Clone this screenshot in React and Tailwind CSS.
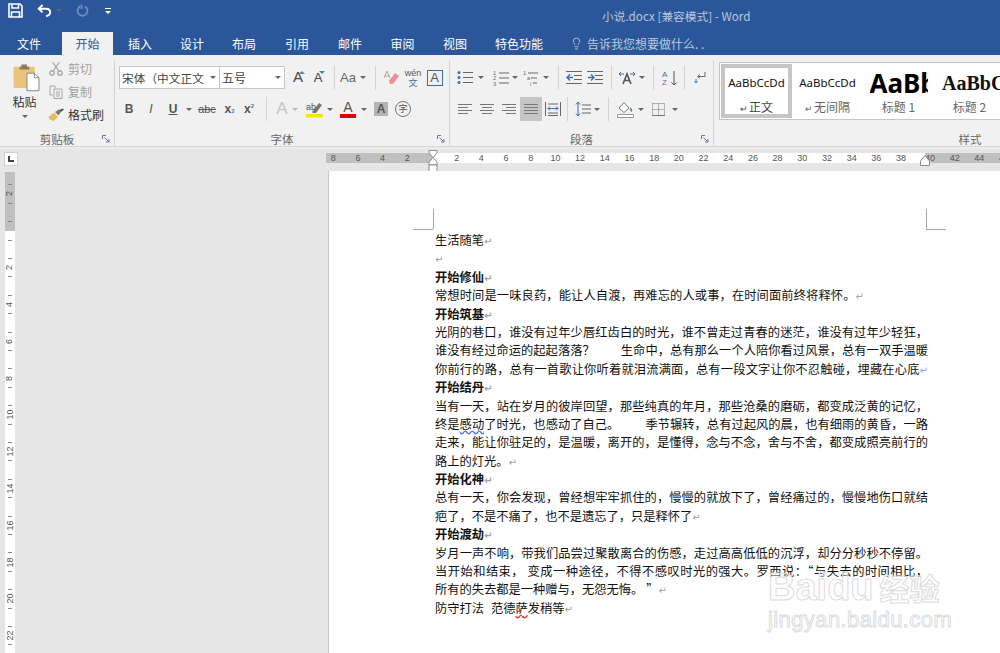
import React from "react";
import { Lightbulb } from "lucide-react";

const CJK = "font-['Noto_Sans_CJK_SC','Liberation_Sans',sans-serif]";

// tiny dropdown triangle
function Caret({ className = "", dim = false }) {
  return (
    <span className={`flex justify-center items-center ${className}`}>
      <span
        className={`w-0 h-0 border-x-[3px] border-t-[3px] border-x-transparent ${
          dim ? "border-t-[#b5b5b5]" : "border-t-[#666666]"
        }`}
      />
    </span>
  );
}

function Sep({ className = "" }) {
  return <span className={`w-px h-[24px] bg-[#d4d4d4] shrink-0 ${className}`} />;
}

function Cell({ className = "", children }) {
  return (
    <span className={`flex items-center justify-center shrink-0 h-full ${className}`}>
      {children}
    </span>
  );
}

function Launcher() {
  return (
    <svg className="absolute right-[4px] top-[3px]" width="8" height="8" viewBox="0 0 8 8" fill="none" stroke="#777">
      <path d="M0.5 4V0.5H4" />
      <path d="M2.5 2.5L7 7M7 4V7H4" stroke="#5a7fb0" />
    </svg>
  );
}

function GroupLabel({ text, launcher = true }) {
  return (
    <div className="relative mt-auto h-[14px] leading-[14px] text-center text-[11.5px] text-[#666666]">
      {text}
      {launcher && <Launcher />}
    </div>
  );
}

function Lines({ ys, x1 = 2, x2 = 16, stroke = "#666" }) {
  return ys.map((y) => <path key={y} d={`M${x1} ${y}H${x2}`} stroke={stroke} />);
}

function Align({ rows }) {
  return (
    <svg width="16" height="14" viewBox="0 0 16 14" fill="none" stroke="#777">
      {rows.map(([a, b], i) => (
        <path key={i} d={`M${a} ${2.5 + i * 3}H${b}`} />
      ))}
    </svg>
  );
}

function TitleBar() {
  return (
    <div className="h-[30px] flex items-start pt-[3px]">
      <svg className="ml-[8px]" width="15" height="15" viewBox="0 0 15 15" fill="none" stroke="#fff" strokeWidth="1.6">
        <path d="M1 1H12L14 3V14H1Z" />
        <path d="M4 1.5V5H10.5V1.5M3.5 14V9H11.5V14" />
      </svg>
      <svg className="ml-[14px] mt-[1px]" width="15" height="14" viewBox="0 0 15 14" fill="none" stroke="#fff" strokeWidth="2">
        <path d="M5.5 1L1.8 4.7L5.5 8.4" />
        <path d="M2 4.7H9C14.5 4.7 14.5 12 9 12" />
      </svg>
      <Caret className="ml-[4px] w-[6px] h-[15px]" />
      <svg className="ml-[13px] mt-[1px]" width="14" height="14" viewBox="0 0 14 14" fill="none" stroke="#6f8fbf" strokeWidth="1.8">
        <path d="M5 2.5A5 5 0 1 0 10 2.5" />
        <path d="M6.5 0.5V5" />
      </svg>
      <span className="ml-[16px] mt-[5px] flex flex-col items-center gap-[2px]">
        <span className="w-[6px] h-px bg-white" />
        <span className="w-0 h-0 border-x-[3px] border-t-[3px] border-x-transparent border-t-white" />
      </span>
      <span className="ml-[491px] mt-[4px] text-[11.7px] text-[#b6c6de] whitespace-nowrap">小说.docx [兼容模式] - Word</span>
    </div>
  );
}

const tabs = [
  ["文件", "w-[62px] pr-[4px]"],
  ["开始", "w-[51px]"],
  ["插入", "w-[54px]"],
  ["设计", "w-[50px]"],
  ["布局", "w-[54px]"],
  ["引用", "w-[52px]"],
  ["邮件", "w-[54px]"],
  ["审阅", "w-[51px]"],
  ["视图", "w-[54px]"],
  ["特色功能", "w-[74px]"],
];

function TabBar() {
  return (
    <div className="h-[25px] flex items-end text-[12px]">
      {tabs.map(([name, w]) => (
        <div
          key={name}
          className={`${w} shrink-0 h-[23px] flex items-center justify-center ${
            name === "开始" ? "bg-[#f1f1f1] text-[#2b579a]" : "text-white"
          }`}
        >
          {name}
        </div>
      ))}
      <div className="ml-[14px] h-[23px] flex items-center gap-[4px] text-[#bac8df] whitespace-nowrap">
        <Lightbulb size={13} strokeWidth={1.6} />
        告诉我您想要做什么. .
      </div>
    </div>
  );
}

function ClipboardGroup() {
  return (
    <div className="w-[115px] shrink-0 flex flex-col border-r border-[#d4d4d4]">
      <div className="flex pt-[3px] h-[60px]">
        <div className="w-[49px] shrink-0 flex flex-col items-center">
          <svg className="ml-[4px]" width="29" height="31" viewBox="0 0 29 31">
            <rect x="0.5" y="4" width="23" height="23" rx="1.5" fill="#eac47a" />
            <path d="M7 4H9V1.5H15V4H17.5V7H7Z" fill="#8a7a62" />
            <path d="M15 11H23L28 16V30H15Z" fill="#fff" stroke="#7f7f7f" />
            <path d="M23 11V16H28" fill="none" stroke="#7f7f7f" />
          </svg>
          <span className="mt-[1px] text-[12px] leading-[18px] text-[#333333]">粘贴</span>
          <Caret className="mt-[2px] h-[8px]" />
        </div>
        <div className="flex flex-col text-[12px] -mt-[6px]">
          <div className="h-[23px] shrink-0 flex items-center text-[#a0a0a0]">
            <svg className="mr-[5px]" width="14" height="15" viewBox="0 0 14 15" fill="none" stroke="#a6a6a6" strokeWidth="1.3">
              <circle cx="3" cy="12" r="2.2" />
              <circle cx="11" cy="12" r="2.2" />
              <path d="M4.2 10L10.5 1M9.8 10L3.5 1" />
            </svg>
            剪切
          </div>
          <div className="h-[23px] shrink-0 flex items-center text-[#a0a0a0]">
            <svg className="mr-[5px]" width="14" height="14" viewBox="0 0 14 14" fill="none" stroke="#a6a6a6">
              <path d="M6 3.5V1H1V10H4M5 4H13V13.5H5Z" />
              <path d="M7 7H11M7 9H11M7 11H11" />
            </svg>
            复制
          </div>
          <div className="h-[23px] shrink-0 flex items-center -ml-[1px] text-[#333333]">
            <svg className="mr-[3px]" width="17" height="14" viewBox="0 0 17 14">
              <path d="M0.5 9L6 4.5L10 9L5 13.5L3.5 11.5L2.5 12.5Z" fill="#e6b95f" />
              <path d="M7 4L11 1.5L13 3.8L10.5 7.5Z" fill="#777" />
              <path d="M11 2L15 0.5L16 1.5L13 4Z" fill="#555" />
            </svg>
            格式刷
          </div>
        </div>
      </div>
      <GroupLabel text="剪贴板" />
    </div>
  );
}

function FontGroup() {
  return (
    <div className={`w-[335px] shrink-0 flex flex-col border-r border-[#d4d4d4]`}>
      <div className="mt-[6px] h-[23px] flex items-center pl-[4px] text-[#444444]">
        <div className="w-[101px] h-full shrink-0 bg-white border border-[#c6c6c6] flex items-center pl-[2px] text-[11.7px] whitespace-nowrap">
          宋体（中文正文
          <Caret className="ml-auto mr-[3px] w-[6px]" />
        </div>
        <div className="w-[65px] h-full shrink-0 bg-white border border-[#c6c6c6] border-l-0 flex items-center pl-[2px] text-[12px]">
          五号
          <Caret className="ml-auto mr-[3px] w-[6px]" />
        </div>
        <Cell className="ml-[3px] w-[20px] text-[15px] font-['Liberation_Sans',sans-serif] relative">
          A<span className="absolute right-[3px] top-[5px] w-0 h-0 border-x-[3px] border-b-[3px] border-x-transparent border-b-[#5a7fb0]" />
        </Cell>
        <Cell className="w-[20px] text-[13px] font-['Liberation_Sans',sans-serif] relative">
          A<span className="absolute right-[3px] top-[5px] w-0 h-0 border-x-[3px] border-t-[3px] border-x-transparent border-t-[#5a7fb0]" />
        </Cell>
        <Sep className="ml-[6px]" />
        <Cell className="ml-[2px] w-[22px] text-[13px] font-['Liberation_Sans',sans-serif] text-[#666666]">Aa</Cell>
        <Caret className="w-[8px]" />
        <Sep className="ml-[8px]" />
        <Cell className="ml-[6px] w-[18px]">
          <svg width="16" height="16" viewBox="0 0 16 16">
            <path d="M6 11L12 3L16 6L10 14H7Z" fill="#ec8f9a" />
            <path d="M1 8L4 1L7 8M2 6H6" fill="none" stroke="#a8a8a8" />
          </svg>
        </Cell>
        <Cell className="ml-[2px] w-[22px] relative">
          <span className="flex flex-col items-center leading-[9px] text-[#3f6fa8]">
            <span className="text-[9px] font-['Liberation_Sans',sans-serif] text-[#555555]">wén</span>
            <span className="text-[9px]">文</span>
          </span>
        </Cell>
        <Cell className="w-[21px]">
          <span className="w-[16px] h-[16px] border border-[#3f6fa8] flex items-center justify-center text-[13px] leading-none font-['Liberation_Sans',sans-serif] text-[#555555]">A</span>
        </Cell>
      </div>
      <div className="mt-[8px] h-[24px] flex items-center pl-[3px] font-['Liberation_Sans',sans-serif] text-[#555555]">
        <Cell className="w-[22px] text-[12px] font-bold">B</Cell>
        <Cell className="w-[22px] text-[12px] italic">I</Cell>
        <Cell className="w-[22px] text-[12px] font-bold underline">U</Cell>
        <Caret className="w-[10px]" />
        <Cell className="w-[26px] text-[11px] line-through">abc</Cell>
        <Cell className="w-[19px] text-[12px] font-bold">
          x<sub className="text-[6px] text-[#4f7fb5]">2</sub>
        </Cell>
        <Cell className="w-[20px] text-[12px] font-bold">
          x<sup className="text-[6px] text-[#4f7fb5]">2</sup>
        </Cell>
        <Sep className="ml-[7px]" />
        <Cell className="ml-[5px] w-[20px] text-[17px] text-[#c4c4c4]">A</Cell>
        <Caret className="w-[6px]" dim />
        <Cell className="ml-[6px] w-[20px]">
          <svg width="17" height="17" viewBox="0 0 17 17">
            <path d="M6 11L13 2L16 4L10 12H7Z" fill="#777" />
            <rect x="0" y="13" width="17" height="3.5" rx="1" fill="#f5e500" />
            <text x="0" y="9" fontSize="9" fontFamily="Liberation Sans" fill="#555">ab</text>
          </svg>
        </Cell>
        <Caret className="ml-[2px] w-[8px]" />
        <Cell className="ml-[4px] w-[20px] relative">
          <span className="flex flex-col items-center">
            <span className="text-[14px] leading-[13px]">A</span>
            <span className="w-[16px] h-[4px] bg-[#e00000]" />
          </span>
        </Cell>
        <Caret className="ml-[2px] w-[8px]" />
        <Cell className="ml-[3px] w-[20px]">
          <span className="w-[14px] h-[14px] bg-[#b4b4b4] flex items-center justify-center text-[12px] font-bold text-[#555555]">A</span>
        </Cell>
        <Cell className="ml-[2px] w-[20px]">
          <span className={`w-[16px] h-[16px] rounded-full border border-[#777777] flex items-center justify-center text-[9px] ${CJK}`}>字</span>
        </Cell>
      </div>
      <GroupLabel text="字体" />
    </div>
  );
}

function ParagraphGroup() {
  return (
    <div className="w-[264px] shrink-0 flex flex-col border-r border-[#d4d4d4]">
      <div className="mt-[6px] h-[23px] flex items-center pl-[5px]">
        <Cell className="w-[20px]">
          <svg width="16" height="15" viewBox="0 0 16 15" fill="none">
            <Lines ys={[2.5, 7.5, 12.5]} x1={6} x2={16} />
            <circle cx="2" cy="2.5" r="1.5" fill="#3f6fa8" />
            <circle cx="2" cy="7.5" r="1.5" fill="#3f6fa8" />
            <circle cx="2" cy="12.5" r="1.5" fill="#3f6fa8" />
          </svg>
        </Cell>
        <Caret className="ml-[2px] w-[8px]" />
        <Cell className="ml-[6px] w-[20px]">
          <svg width="16" height="16" viewBox="0 0 16 16" fill="none">
            <Lines ys={[3, 8, 13]} x1={6} x2={16} />
            <text x="0" y="5" fontSize="5.5" fill="#3f6fa8" fontFamily="Liberation Sans">1</text>
            <text x="0" y="10" fontSize="5.5" fill="#3f6fa8" fontFamily="Liberation Sans">2</text>
            <text x="0" y="15.5" fontSize="5.5" fill="#3f6fa8" fontFamily="Liberation Sans">3</text>
          </svg>
        </Cell>
        <Caret className="w-[8px]" />
        <Cell className="ml-[2px] w-[20px]">
          <svg width="17" height="16" viewBox="0 0 17 16" fill="none">
            <path d="M5 3H15M8 8H14M10 13H14" stroke="#666" />
            <text x="0" y="5" fontSize="5.5" fill="#3f6fa8" fontFamily="Liberation Sans">1</text>
            <text x="4" y="10" fontSize="5.5" fill="#3f6fa8" fontFamily="Liberation Sans">a</text>
            <text x="7" y="15.5" fontSize="5.5" fill="#3f6fa8" fontFamily="Liberation Sans">i</text>
          </svg>
        </Cell>
        <Caret className="ml-[1px] w-[8px]" />
        <Sep className="ml-[8px]" />
        <Cell className="ml-[5px] w-[20px]">
          <svg width="16" height="13" viewBox="0 0 16 13" fill="none">
            <Lines ys={[0.5, 12.5]} x1={0} x2={16} />
            <Lines ys={[4.5, 8.5]} x1={8} x2={16} />
            <path d="M7 6.5H1M4 3.5L1 6.5L4 9.5" stroke="#3f6fa8" strokeWidth="1.4" />
          </svg>
        </Cell>
        <Cell className="ml-[1px] w-[20px]">
          <svg width="16" height="13" viewBox="0 0 16 13" fill="none">
            <Lines ys={[0.5, 12.5]} x1={0} x2={16} />
            <Lines ys={[4.5, 8.5]} x1={8} x2={16} />
            <path d="M1 6.5H7M4 3.5L7 6.5L4 9.5" stroke="#3f6fa8" strokeWidth="1.4" />
          </svg>
        </Cell>
        <Sep className="ml-[6px]" />
        <Cell className="ml-[5px] w-[20px]">
          <svg width="18" height="14" viewBox="0 0 18 14" fill="none">
            <path d="M5 13L9 3L13 13M6.5 9.5H11.5" stroke="#555" strokeWidth="1.6" />
            <path d="M1 3H6M1 3L3 1M1 3L3 5M17 3H12M17 3L15 1M17 3L15 5" stroke="#3f6fa8" />
          </svg>
        </Cell>
        <Caret className="ml-[1px] w-[8px]" />
        <Sep className="ml-[7px]" />
        <Cell className="ml-[6px] w-[20px]">
          <svg width="16" height="16" viewBox="0 0 16 16" fill="none">
            <text x="0" y="7" fontSize="8" fill="#3f6fa8" fontFamily="Liberation Sans">A</text>
            <text x="0" y="15" fontSize="8" fill="#8e5ea8" fontFamily="Liberation Sans">Z</text>
            <path d="M12 1V15M9.5 12.5L12 15L14.5 12.5" stroke="#555" />
          </svg>
        </Cell>
        <Sep className="ml-[4px]" />
        <Cell className="ml-[5px] w-[20px]">
          <svg width="12" height="13" viewBox="0 0 12 13" fill="none">
            <path d="M11 1V5.5H4M6 3.5L3.5 5.5L6 7.5" stroke="#666" />
            <path d="M2 8V12M0.5 10.5L2 12L3.5 10.5" stroke="#3f6fa8" />
          </svg>
        </Cell>
      </div>
      <div className="mt-[8px] h-[24px] flex items-center pl-[4px]">
        <Cell className="w-[22px]"><Align rows={[[1, 15], [1, 11], [1, 15], [1, 11]]} /></Cell>
        <Cell className="w-[22px]"><Align rows={[[1, 15], [3, 13], [1, 15], [3, 13]]} /></Cell>
        <Cell className="w-[22px]"><Align rows={[[1, 15], [5, 15], [1, 15], [5, 15]]} /></Cell>
        <Cell className="w-[22px] bg-[#c6c6c6]"><Align rows={[[1, 15], [1, 15], [1, 15], [1, 15]]} /></Cell>
        <Cell className="w-[22px]">
          <svg width="16" height="16" viewBox="0 0 16 16" fill="none" stroke="#666">
            <path d="M0.5 1V15M15.5 1V15M3 3H13M3 12H13M3 14.5H13" />
            <path d="M3 7.5H13M5 5.5L3 7.5L5 9.5M11 5.5L13 7.5L11 9.5" stroke="#3f6fa8" />
          </svg>
        </Cell>
        <Sep className="ml-[3px]" />
        <Cell className="ml-[5px] w-[20px]">
          <svg width="16" height="16" viewBox="0 0 16 16" fill="none">
            <Lines ys={[4, 8, 12]} x1={7} x2={16} />
            <path d="M3 1V15M1 3.5L3 1L5 3.5M1 12.5L3 15L5 12.5" stroke="#3f6fa8" />
          </svg>
        </Cell>
        <Caret className="w-[8px]" />
        <Sep className="ml-[7px]" />
        <Cell className="ml-[6px] w-[20px]">
          <svg width="17" height="17" viewBox="0 0 17 17" fill="none">
            <path d="M2 7L7 1.5L12 7L7 11.5Z" fill="#fff" stroke="#777" />
            <path d="M13 6C15 8 16 9.5 14.5 11C13.5 10.5 13 8 13 6Z" fill="#3f6fa8" />
            <path d="M0.5 13.5H16.5V16.5H0.5Z" fill="#fff" stroke="#999" />
          </svg>
        </Cell>
        <Caret className="ml-[2px] w-[8px]" />
        <Cell className="ml-[3px] w-[20px]">
          <svg width="13" height="13" viewBox="0 0 13 13" fill="none" stroke="#777" strokeDasharray="1 1">
            <path d="M0.5 0.5H12.5V12.5M0.5 0.5V12.5M6.5 0.5V12.5M0.5 6.5H12.5" />
            <path d="M0 12.5H13" strokeDasharray="none" />
          </svg>
        </Cell>
        <Caret className="ml-[3px] w-[8px]" />
      </div>
      <GroupLabel text="段落" />
    </div>
  );
}

function StyleItem({ selected, preview, previewClass, label, mark, labelClass = "text-[#666666]" }) {
  return (
    <div
      className={`w-[71px] shrink-0 h-full flex flex-col items-center overflow-hidden ${
        selected ? "border-[4px] border-[#c6c6c6]" : "border-[4px] border-transparent"
      }`}
    >
      <div className={`h-[30px] shrink-0 w-full flex items-center leading-none whitespace-nowrap overflow-hidden ${previewClass}`}>
        {preview}
      </div>
      <div className={`mt-[2px] text-[12px] leading-[14px] whitespace-nowrap ${labelClass}`}>
        {mark && <span className="text-[9px] mr-[1px]">↵</span>}
        {label}
      </div>
    </div>
  );
}

function StylesGroup() {
  return (
    <div className="w-[507px] shrink-0 flex flex-col pl-[5px]">
      <div className="mt-[2px] h-[58px] bg-white border border-[#c6c6c6] border-r-0 flex p-[1px] overflow-hidden">
        <StyleItem selected mark preview="AaBbCcDd" previewClass="justify-center text-[11.5px] font-['Noto_Sans',sans-serif] text-[#111111]" label="正文" labelClass="text-[#444444]" />
        <StyleItem mark preview="AaBbCcDd" previewClass="justify-center text-[11.5px] font-['Noto_Sans',sans-serif] text-[#111111]" label="无间隔" />
        <StyleItem
          preview={<span className="w-[58px] overflow-hidden text-left">AaBb</span>}
          previewClass="justify-center text-[26px] font-bold font-['Noto_Sans',sans-serif] text-black"
          label="标题 1"
        />
        <StyleItem
          preview="AaBbC"
          previewClass="pl-[4px] text-[20px] font-bold font-['Liberation_Serif',serif] text-[#111111]"
          label="标题 2"
        />
      </div>
      <GroupLabel text="样式" launcher={false} />
    </div>
  );
}

function Ribbon() {
  return (
    <div className="h-[92px] bg-[#f1f1f1] border-b border-[#d6d6d6] pt-[5px] flex overflow-hidden">
      <ClipboardGroup />
      <FontGroup />
      <ParagraphGroup />
      <StylesGroup />
    </div>
  );
}

function RulerNums({ nums }) {
  return nums.map((n) => (
    <span key={n} className="w-[24.7px] shrink-0 text-center">
      {n}
    </span>
  ));
}

const whiteNums = [];
for (let i = 2; i <= 38; i += 2) whiteNums.push(i);

function HorizontalRuler() {
  return (
    <div className="relative h-[22px] flex items-start pt-[4px] pl-[4px]">
      <div className="w-[14px] h-[14px] mt-[-1px] bg-white border border-[#d0d0d0] flex items-center justify-center">
        <span className="w-[6px] h-[6px] border-l-2 border-b-2 border-[#444444]" />
      </div>
      <div className="ml-[308px] h-[10px] flex text-[9px] leading-[10px] font-['Liberation_Sans',sans-serif] text-[#555555]">
        <div className="w-[106px] bg-[#c0c0c0] flex justify-end pr-[12.4px] overflow-hidden">
          <RulerNums nums={[8, 6, 4, 2]} />
        </div>
        <div className="w-[493px] bg-white flex pl-[12.35px] overflow-hidden">
          <RulerNums nums={whiteNums} />
        </div>
        <div className="w-[75px] bg-[#c0c0c0] flex overflow-hidden">
          <span className="-ml-[7.4px] flex">
            <RulerNums nums={[40, 42, 44, 46]} />
          </span>
        </div>
      </div>
      {/* indent markers */}
      <svg className="absolute left-[428px] top-[1px]" width="10" height="22" viewBox="0 0 10 22" fill="#fff" stroke="#8c8c8c">
        <path d="M1 0.5H9V3L5 7.5L1 3Z" />
        <path d="M5 7.5L9 12V15H1V12Z" />
        <path d="M1 15H9V21.5H1Z" />
      </svg>
      <svg className="absolute left-[920px] top-[6px]" width="10" height="11" viewBox="0 0 10 11" fill="#fff" stroke="#8c8c8c">
        <path d="M5 0.5L9.5 6V10.5H0.5V6Z" />
      </svg>
    </div>
  );
}

function VCell({ n }) {
  return (
    <div className="h-[36.8px] shrink-0 flex flex-col items-center justify-center gap-[3.2px]">
      <span className="w-[4px] h-px bg-[#888888]" />
      <span className="h-[11px] leading-[11px] text-[9px] -rotate-90">{n}</span>
      <span className="w-[4px] h-px bg-[#888888]" />
    </div>
  );
}

function VTick() {
  return (
    <div className="h-[18.4px] shrink-0 flex items-center justify-center">
      <span className="w-[4px] h-px bg-[#888888]" />
    </div>
  );
}

function VerticalRuler() {
  return (
    <div className="ml-[5px] mt-[1px] w-[10px] shrink-0 flex flex-col font-['Liberation_Sans',sans-serif] text-[#555555] overflow-hidden">
      <div className="h-[59px] shrink-0 bg-[#c0c0c0] pt-[3.6px]">
        <VCell n={2} />
        <VTick />
      </div>
      <div className="flex-1 bg-white">
        <VTick />
        {[2, 4, 6, 8, 10, 12, 14, 16, 18, 20, 22].map((n) => (
          <VCell key={n} n={n} />
        ))}
      </div>
    </div>
  );
}

// paragraph mark
function P() {
  return <span className="text-[10px] text-[#a0a0a0] font-['DejaVu_Sans',sans-serif]">↵</span>;
}

function Line({ children, bold, full, className = "" }) {
  return (
    <div
      className={`h-[18.4px] leading-[18.4px] whitespace-nowrap ${bold ? "font-bold" : ""} ${
        full ? "whitespace-normal [text-align:justify] [text-align-last:justify]" : ""
      } ${className}`}
    >
      {children}
    </div>
  );
}

function Gap({ className }) {
  return <span className={`inline-block ${className}`} />;
}

function Page() {
  return (
    <div className="relative ml-[313px] flex-1 bg-white border-l border-[#c6c6c6] pt-[60px] pl-[106px] pr-[72px] overflow-hidden">
      {/* margin crop marks */}
      <span className="absolute left-[104px] top-[38px] w-px h-[20px] bg-[#a6a6a6]" />
      <span className="absolute left-[84px] top-[58px] w-[20px] h-px bg-[#a6a6a6]" />
      <span className="absolute left-[597px] top-[38px] w-px h-[20px] bg-[#a6a6a6]" />
      <span className="absolute left-[597px] top-[58px] w-[20px] h-px bg-[#a6a6a6]" />

      <div className={`text-[12.25px] text-[#111111] ${CJK}`}>
        <Line>生活随笔<P /></Line>
        <Line><P /></Line>
        <Line bold>开始修仙<P /></Line>
        <Line className="tracking-[0.12px]">常想时间是一味良药，能让人自渡，再难忘的人或事，在时间面前终将释怀。<P /></Line>
        <Line bold>开始筑基<P /></Line>
        <Line full>光阴的巷口，谁没有过年少唇红齿白的时光，谁不曾走过青春的迷茫，谁没有过年少轻狂，</Line>
        <Line full>谁没有经过命运的起起落落？<Gap className="w-[26px]" />生命中，总有那么一个人陪你看过风景，总有一双手温暖</Line>
        <Line full>你前行的路，总有一首歌让你听着就泪流满面，总有一段文字让你不忍触碰，埋藏在心底<P /></Line>
        <Line bold>开始结丹<P /></Line>
        <Line full>当有一天，站在岁月的彼岸回望，那些纯真的年月，那些沧桑的磨砺，都变成泛黄的记忆，</Line>
        <Line full>终是<span className="underline decoration-wavy decoration-[#4a6fd8]">感动</span>了时光，也感动了自己。<Gap className="w-[26px]" />季节辗转，总有过起风的晨，也有细雨的黄昏，一路</Line>
        <Line full>走来，能让你驻足的，是温暖，离开的，是懂得，念与不念，舍与不舍，都变成照亮前行的</Line>
        <Line>路上的灯光。<P /></Line>
        <Line bold>开始化神<P /></Line>
        <Line full>总有一天，你会发现，曾经想牢牢抓住的，慢慢的就放下了，曾经痛过的，慢慢地伤口就结</Line>
        <Line>疤了，不是不痛了，也不是遗忘了，只是释怀了<P /></Line>
        <Line bold>开始渡劫<P /></Line>
        <Line full>岁月一声不响，带我们品尝过聚散离合的伤感，走过高高低低的沉浮，却分分秒秒不停留。</Line>
        <Line full>当开始和结束，<Gap className="w-[3px]" />变成一种途径，不得不感叹时光的强大。罗西说：“与失去的时间相比，</Line>
        <Line>所有的失去都是一种赠与，无怨无悔。<Gap className="w-[3px]" />”<P /></Line>
        <Line>防守打法<Gap className="w-[7px]" />范德<span className="underline decoration-wavy decoration-[#e03030]">萨</span>发稍等<P /></Line>
      </div>

      {/* baidu watermark */}
      <div className="absolute left-[439px] top-[398px] flex flex-col text-white/40 [-webkit-text-stroke:1px_#dcdcdc] font-['Liberation_Sans',sans-serif]">
        <div className="flex items-center h-[36px] text-[38px] font-bold leading-none">
          Baidu
          <span className={`ml-[6px] text-[30px] ${CJK}`}>经验</span>
        </div>
        <div className="mt-[3px] text-[22px] leading-[24px] tracking-[0.4px] whitespace-nowrap">jingyan.baidu.com</div>
      </div>
    </div>
  );
}

export default function App() {
  return (
    <div className={`w-[1000px] h-[653px] overflow-hidden flex flex-col bg-[#e6e6e6] ${CJK}`}>
      <div className="bg-[#2b579a]">
        <TitleBar />
        <TabBar />
      </div>
      <Ribbon />
      <div className="h-[2px] bg-[#ececec]" />
      <HorizontalRuler />
      <div className="flex-1 min-h-0 flex">
        <VerticalRuler />
        <Page />
      </div>
    </div>
  );
}
